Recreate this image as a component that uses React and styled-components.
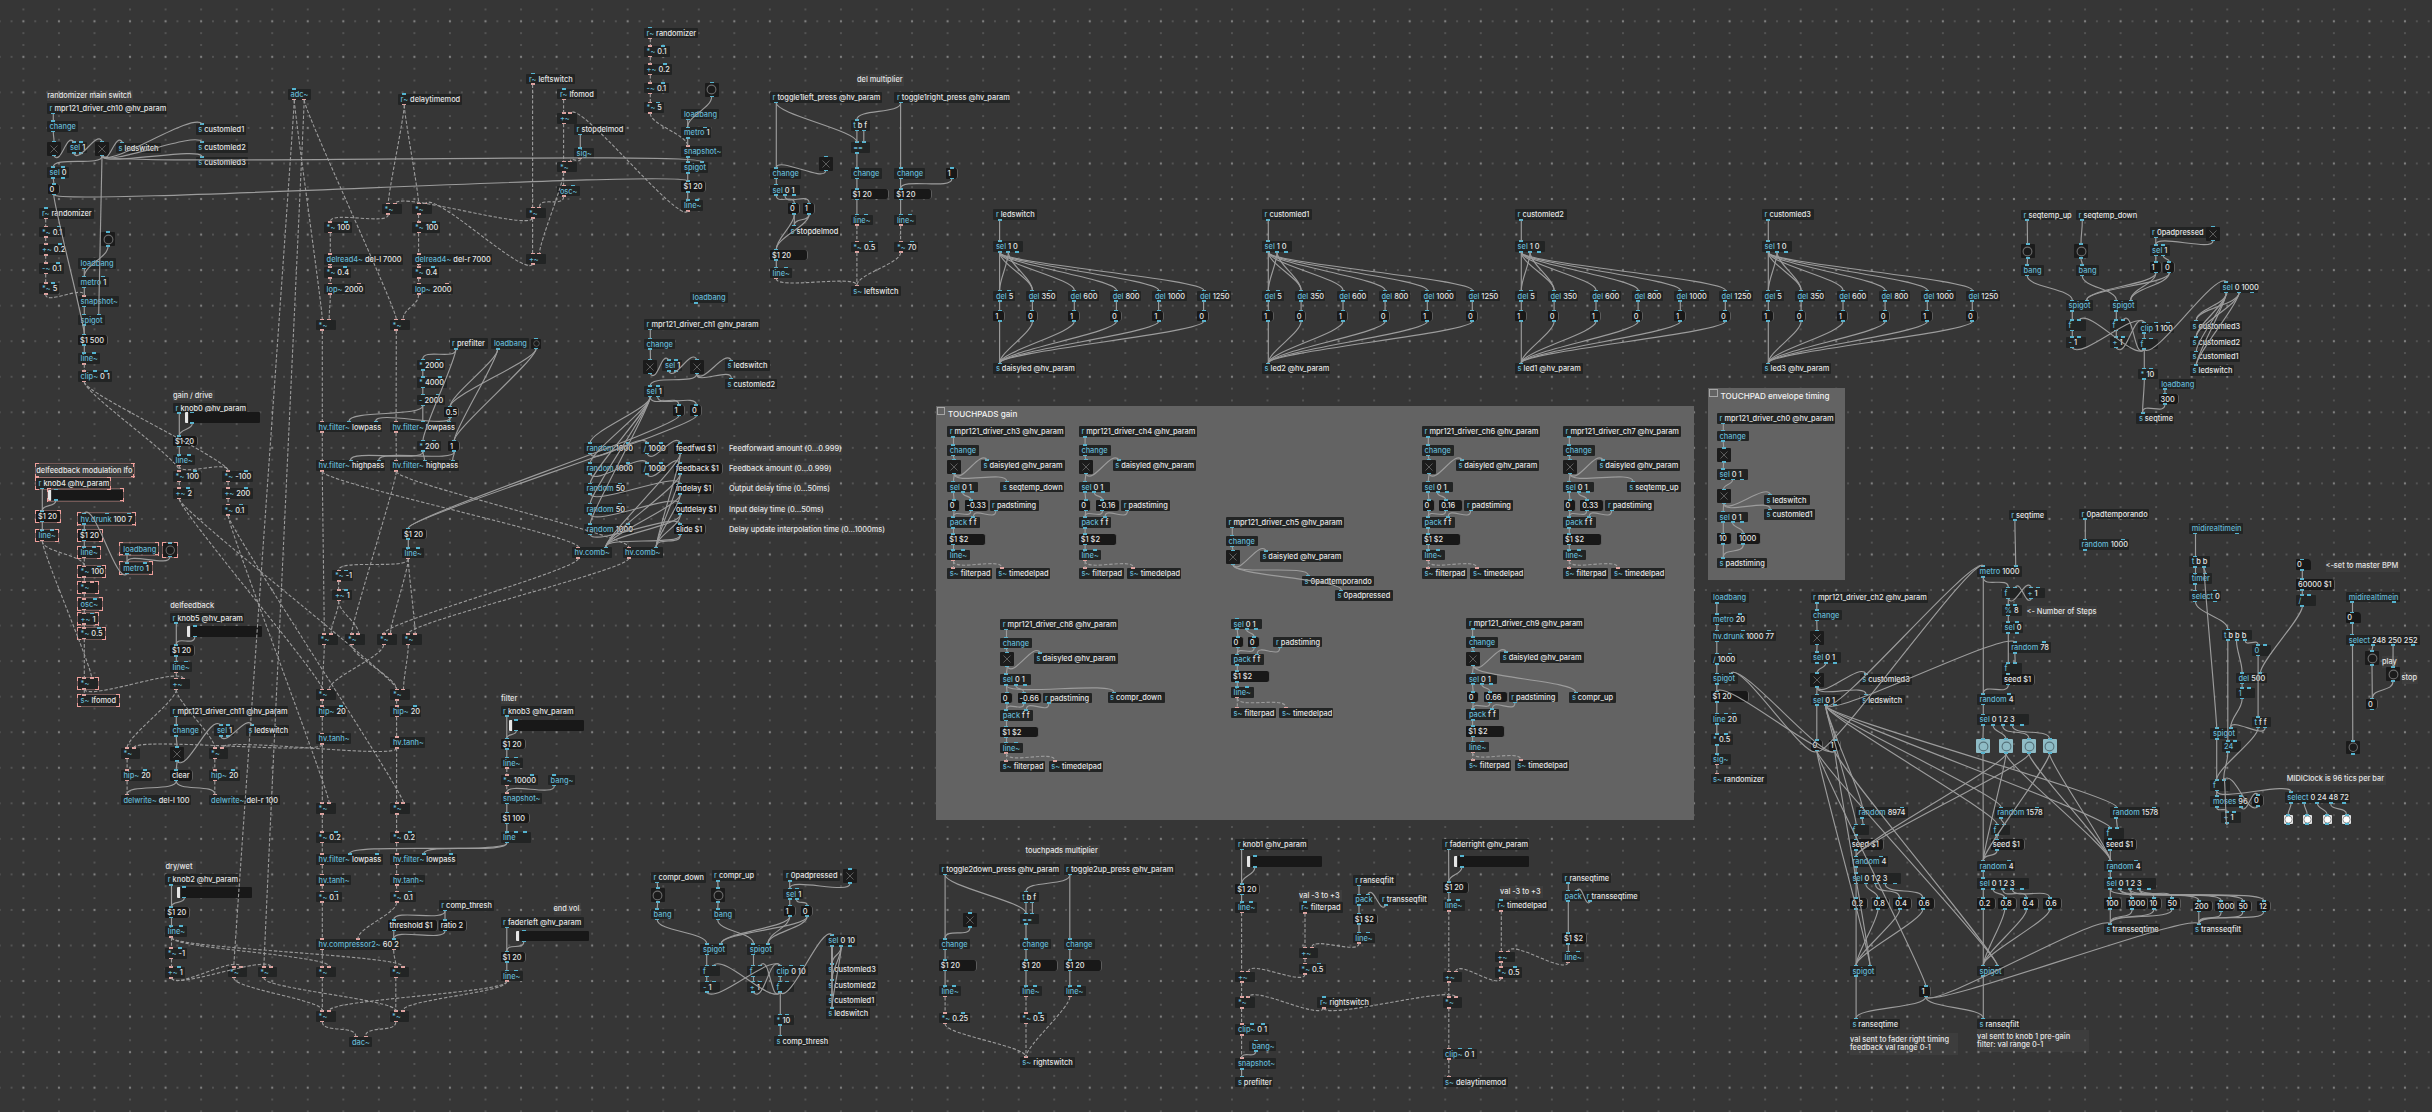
import React from "react";
import styled, { createGlobalStyle, css } from "styled-components";

const GlobalStyle = createGlobalStyle`
  html, body { margin: 0; padding: 0; background: #363636; }
  body {
    font-family: Inter, "Liberation Sans", sans-serif;
    font-feature-settings: "calt" 0, "liga" 0;
    overflow: hidden;
  }
`;

const color = {
  canvas: "#363636",
  panel: "#636363",
  object: "#222424",
  message: "#181818",
  text: "#e6e6e6",
  name: "#66b8d4",
  control: "#54b4d0",
  signal: "#e0a3a0",
  wire: "#9c9c9c",
  select: "#f0a09c",
};

const GRID = 35.546;
const BOX_H = 10.7;
const PORT_INSET = 6.3;

/* ---------- patch description ----------
   kind id x y width inlets outlets text
   inlets / outlets: one letter per port, b = control, s = signal, - = none */
const NODES = `
o a1 47 103 120 - b r mpr121_driver_ch10 @hv_param
o a2 47 121 31 b b change
t a3 47 141.5 14 b b
o a4 67.4 142.3 19.6 bb bb sel 1
t a5 95 141.5 14 b b
o a6 116 142.5 45 b - s ledswitch
o a7 195.7 124 50.5 b - s customled1
o a8 195.7 142.3 52 b - s customled2
o a9 195.7 157.3 52 b - s customled3
o a10 47 167.3 22 bb bb sel 0
m a11 47.5 183.8 12 b b 0
o a12 39.4 208 54.5 b s r~ randomizer
o a13 39.4 226.5 26 sb s *~ 0.1
o a14 39.4 244.3 27 sb s +~ 0.2
o a15 39.4 263 25 sb s -~ 0.1
o a16 39.4 283.3 20 sb s *~ 5
n a17 101 232 14 b b
o a18 78 258 38 - b loadbang
o a19 78 276.7 31 bb b metro 1
o a20 78 296 41 s b snapshot~
o a21 78 314.5 27 bb b spigot
m a22 78 334.5 30 b b $1 500
o a23 78 353.2 22 bb s line~
o a24 78 371 34 sbb s clip~ 0 1
o adc 288 89 22.5 b ss adc~
o dtm 398 94 64 b s r~ delaytimemod
o b1 382 203.5 19.5 ss s *~
o b2 412.3 203.5 19.5 ss s *~
o b3 324 222 28 sb s *~ 100
o b4 412.3 222 28 sb s *~ 100
o b5 324 254 79 s s delread4~ del-l 7000
o b6 412.3 254 80 s s delread4~ del-r 7000
o b7 324 267.3 27 sb s *~ 0.4
o b8 412.3 267.3 27 sb s *~ 0.4
o b9 324 283.5 41 ss s lop~ 2000
o b10 412.3 283.5 41 ss s lop~ 2000
o b11 316 319.5 19.5 ss s *~
o b12 390 319.5 19.5 ss s *~
o c1 449.5 338.3 38 - b r prefilter
o c2 491.3 338.3 38 - b loadbang
n c3 531 338.5 10 b b
o c4 416.5 359.5 28 bb b * 2000
o c5 416.5 377 30 bb b * 4000
o c6 416.5 394.7 28 bb b - 2000
m c7 443.8 406.7 15.5 b b 0.5
o d1 316 421.5 66 sbb s hv.filter~ lowpass
o d2 389.8 421.5 66 sbb s hv.filter~ lowpass
o c8 416.7 440.6 24 bb b * 200
m c9 448 440.6 12 b b 1
o d3 316 460.4 69 sbb s hv.filter~ highpass
o d4 390 460.4 69 sbb s hv.filter~ highpass
o e1 173 402.5 74 - b r knob0 @hv_param
h e2 184.5 412.4 75 b b
m e3 173 435.8 25 b b $1 20
o e4 173 454.8 22 bb s line~
o e5 173 471 28 sb s *~ 100
o e6 173 488 21 sb s +~ 2
o e7 221.8 471 31 sb s *~ -100
o e8 221.8 488 31 sb s +~ 200
o e9 221.8 504.5 26 sb s *~ 0.1
O f1 36 478 74 - b r knob4 @hv_param
H f2 48 489.6 75 b b
M f3 36 511 25 b b $1 20
O f4 36 530 22 bb s line~
O f5 78 513.5 57 bbb b hv.drunk 100 7
M f6 78 530 25 b b $1 20
O f7 78 547 22 bb s line~
O f8 78 566.4 27 sb s *~ 100
O f9 78 582.3 20 ss s *~
O f10 78 598.8 23.5 sb s osc~
O f11 78 613.6 20 sb s +~ 1
O f12 78 628 27 sb s *~ 0.5
O f13 78 678.3 20 ss s *~
O f14 78 695.3 41 s - s~ lfomod
O f15 120.7 543.5 37 - b loadbang
N f16 163 543 13.5 b b
O f17 120.7 562.8 31 bb b metro 1
o g1 170 612.5 74 - b r knob5 @hv_param
h g2 187 626 75 b b
m g3 170 645.2 25 b b $1 20
o g4 170 661.7 22 bb s line~
o g5 170 678.7 19.5 ss s +~
o h1 170 706 118 - b r mpr121_driver_ch11 @hv_param
o h2 170 725.3 31 b b change
t h3 170 747 14 b b
o h4 214.3 725.3 20 bb bb sel 1
o h5 245.8 725.3 43 b - s ledswitch
o h6 120.8 748 19.5 ss s *~
o h7 208.5 748 19.5 ss s *~
o h8 120.8 770 31 sb s hip~ 20
o h9 208.5 770 31 sb s hip~ 20
m h10 170 770 22.5 b b clear
o h11 120.8 794.7 70 s - delwrite~ del-l 100
o h12 208.5 794.7 71 s - delwrite~ del-r 100
m i1 402 528.5 25 b b $1 20
o i2 402 547.8 22 bb s line~
o i3 332.3 570.4 20.5 sb s *~ -1
o i4 332.3 589.8 20 sb s +~ 1
o j1 318 634 19.5 ss s *~
o j2 345.3 634 19.5 ss s *~
o j3 377.3 634 19.5 ss s *~
o j4 402 634 19.5 ss s *~
o k1 316 689.4 19.5 ss s *~
o k2 390.3 689.4 19.5 ss s *~
o k3 316 706 31 sb s hip~ 20
o k4 390.3 706 31 sb s hip~ 20
o k5 316 733.4 35 s s hv.tanh~
o k6 390.3 737.3 35 s s hv.tanh~
o k7 316 803.3 19.5 ss s *~
o k8 390.3 803.3 19.5 ss s *~
o k9 316 832 26 sb s *~ 0.2
o k10 390.3 832 26 sb s *~ 0.2
o k11 316 854 67 sbb s hv.filter~ lowpass
o k12 390.3 854 67 sbb s hv.filter~ lowpass
o k13 316 874.5 35 s s hv.tanh~
o k14 390.3 874.5 35 s s hv.tanh~
o k15 316 891.5 26 sb s *~ 0.1
o k16 390.3 891.5 26 sb s *~ 0.1
o l1 438.7 900 55 - b r comp_thresh
m l2 387.5 920 50 b b threshold $1
m l3 438.7 920 28.5 b b ratio 2
o l4 316 939 84 ssb ss hv.compressor2~ 60 2
o m1 227.5 966.8 19.5 ss s *~
o m2 257.6 966.8 19.5 ss s *~
o m3 316 966.8 19.5 ss s *~
o m4 389.5 966.8 19.5 ss s *~
o m5 316 1011 19.5 ss s *~
o m6 389.5 1011 19.5 ss s *~
o m7 349.4 1036.5 22.5 ss - dac~
o n1 165.2 874.3 74 - b r knob2 @hv_param
h n2 176.5 887 75 b b
m n3 165.2 907 25 b b $1 20
o n4 165.2 926.3 22 bb s line~
o n5 165.2 948 21.5 sb s *~ -1
o n6 165.2 967.2 20 sb s +~ 1
o o1 500.5 917 83 - b r faderleft @hv_param
h o2 516 930.7 72.5 b b
m o3 500.5 951.5 25 b b $1 20
o o4 500.5 970.5 22 bb s line~
o p1 500.5 705.5 74.5 - b r knob3 @hv_param
h p2 508.5 720 75 b b
m p3 500.5 738.5 25 b b $1 20
o p4 500.5 757.5 22 bb s line~
o p5 500.5 774.8 37.5 sb s *~ 10000
o p6 548 774.8 27 b b bang~
o p7 500.5 793 41 s b snapshot~
m p8 500.5 812.7 29 b b $1 100
o p9 500.5 832 30.5 bbb b line
o q1 526.3 73.6 49 b s r~ leftswitch
o q2 557.3 88.8 39.5 b s r~ lfomod
o q3 557.3 113 19.5 ss s +~
o q4 574 124 51 - b r stopdelmod
o q5 574 148 20 b s sig~
o q6 557.3 161.5 19.5 ss s *~
o q7 557.3 185.5 22.5 sb s osc~
o q8 526.3 207.5 19.5 ss s *~
o q9 526.3 253.5 19.5 ss s +~
o r1 644 27.7 54 b s r~ randomizer
o r2 644 46 25.5 sb s *~ 0.1
o r3 644 64 27.5 sb s +~ 0.2
o r4 644 82.8 25 sb s -~ 0.1
o r5 644 102.4 20 sb s *~ 5
n r6 704.6 82.5 14 b b
o r7 681.4 108.7 37.5 - b loadbang
o r8 681.4 127.4 30 bb b metro 1
o r9 681.4 146.3 41 s b snapshot~
o r10 681.4 162.3 27 bb b spigot
m r11 681.4 181.2 25 b b $1 20
o r12 681.4 200.3 22 bb s line~
o s1 770 92 112 - b r toggle1left_press @hv_param
o s2 894.3 92 116 - b r toggle1right_press @hv_param
o s3 850.6 120 19.5 b bb t b f
o s4 850.6 142.3 19.5 bb b ==
t s5 818.6 156.6 14 b b
o s6 770 168 31 b b change
o s7 850.6 168 31 b b change
o s8 894.3 168 31 b b change
o s9 770 184.5 30 b bbb sel 0 1
m s10 788 203.4 12 b b 0
m s11 802.8 203.4 12 b b 1
o s12 788 225.5 52 b - s stopdelmod
m s13 770 249.5 38 b b $1 20
o s14 770 267.7 22 bb s line~
m s15 850.6 188.8 38 b b $1 20
m s16 894.3 188.8 38 b b $1 20
o s17 850.6 214.5 22 bb s line~
o s18 894.3 214.5 22 bb s line~
o s19 850.6 241.5 27 sb s *~ 0.5
o s20 894.3 241.5 24 sb s *~ 70
o s21 850.6 285.7 50 s - s~ leftswitch
m s22 945.5 168 12 b b 1
o t0 690 292.2 38 - b loadbang
o t1 644 319 116 - b r mpr121_driver_ch1 @hv_param
o t2 644 338.6 31 b b change
t t3 643.4 359.6 14 b b
o t4 662.4 360.2 20 bb bb sel 1
t t5 689.6 359.6 14 b b
o t6 725 360.4 45 b - s ledswitch
o t7 725 378.5 52 b - s customled2
o t8 644 386 20 bb bb sel 1
m t9 672.5 405 12 b b 1
m t10 690 405 12 b b 0
o u1 584 443 50 bb b random 1000
o u2 584 463.2 50 bb b random 1000
o u3 584 483.4 42 bb b random 50
o u4 584 503.6 42 bb b random 50
o u5 584 523.8 50 bb b random 1000
o v1 641 443 26.5 bb b / 1000
o v2 641 463.2 26.5 bb b / 1000
m w1 674 443 44 b b feedfwd $1
m w2 674 463.2 49 b b feedback $1
m w3 674 483.4 40 b b indelay $1
m w4 674 503.6 46 b b outdelay $1
m w5 674 523.8 32 b b slide $1
o x1 572 547.4 40 sb s hv.comb~
o x2 622.5 547.4 40 sb s hv.comb~
o y1 651 872 55 - b r compr_down
o y2 711.5 870.2 44.5 - b r compr_up
o y3 783.4 870.2 57 - b r 0padpressed
t y4 843 869.3 14 b b
n y5 650.6 888 14 b b
n y6 711 888 14 b b
o y7 783.4 888.6 19.5 bb bb sel 1
m y8 783.5 905.5 12 b b 1
m y9 800.8 905.5 12 b b 0
o y10 651 908.8 23 b b bang
o y11 711.5 908.8 23 b b bang
o y12 700.4 944 27 bb b spigot
o y13 747.2 944 27 bb b spigot
o y14 700.4 965.7 19.5 bb b f
o y15 747.2 965.7 19.5 bb b f
o y16 774 965.7 34 bbb b clip 0 10
o y17 700.4 981.5 19.5 bb b - 1
o y18 747.2 981.5 19.5 bb b + 1
o y19 774 981.5 19.5 bb b f
o y20 774 1014.5 19.5 bb b * 10
o y21 774 1035.6 55 b - s comp_thresh
o y22 825.7 935.3 31 b bbb sel 0 10
o y23 825.7 964 52 b - s customled3
o y24 825.7 980.2 52 b - s customled2
o y25 825.7 995 50 b - s customled1
o y26 825.7 1008.3 44 b - s ledswitch
o z1 938.8 864 121 - b r toggle2down_press @hv_param
o z2 1063.5 864 111 - b r toggle2up_press @hv_param
o z3 1019.7 891.7 19 b bb t b f
o z4 1019.7 913.5 19 bb b ==
t z5 963 913 14 b b
o z6 938.8 938.8 31 b b change
o z7 1019.7 938.8 31 b b change
o z8 1063.5 938.8 31 b b change
m z9 938.8 960 38 b b $1 20
m z10 1019.7 960 38 b b $1 20
m z11 1063.5 960 38 b b $1 20
o z12 938.8 985.8 22 bb s line~
o z13 1019.7 985.8 22 bb s line~
o z14 1063.5 985.8 22 bb s line~
o z15 938.8 1012.8 31 sb s *~ 0.25
o z16 1019.7 1012.8 27 sb s *~ 0.5
o z17 1019.7 1057.3 55 s - s~ rightswitch
o M1 1235.3 839 73 - b r knob1 @hv_param
h M2 1247 856.3 75 b b
m M3 1235.3 883.8 25 b b $1 20
o M4 1235.3 902 22 bb s line~
o M5 1235.3 971.5 19.5 ss s +~
o M6 1235.3 997.3 19.5 ss s *~
o M7 1235.3 1024.3 34 sbb s clip~ 0 1
o M8 1249.4 1040.5 27 b b bang~
o M9 1235.3 1058.3 41 s b snapshot~
o M10 1235.3 1076.6 38 b - s prefilter
o N2 1298.7 902.3 44 b s r~ filterpad
o N3 1298.7 947.7 19.5 ss s +~
o N4 1298.7 963.5 27 sb s *~ 0.5
o O1 1352.7 875 43 - b r ranseqfilt
o O2 1352.7 894.4 21.5 bb b pack
o O3 1379.4 894.4 49 - b r transseqfilt
m O4 1352.7 913.5 25 b b $1 $2
o O5 1352.7 932.5 22 bb s line~
o P1 1317.4 997.3 54 b s r~ rightswitch
o Q1 1442.3 839 87 - b r faderright @hv_param
h Q2 1454 856.3 75 b b
m Q3 1442.5 882 26 b b $1 20
o Q4 1442.5 900.3 22 bb s line~
o Q5 1442.5 971.5 19.5 ss s +~
o Q6 1442.5 997.3 19.5 ss s *~
o Q7 1442.5 1048.6 34 sbb s clip~ 0 1
o Q8 1442.5 1076.6 65 s - s~ delaytimemod
o R2 1495 900.3 53 b s r~ timedelpad
o R3 1495 951.5 19.5 ss s +~
o R4 1495 967.3 26.5 sb s *~ 0.5
o S1 1562 872.6 49 - b r ranseqtime
o S2 1562 890.6 21.5 bb b pack
o S3 1584 890.6 56 - b r transseqtime
m S4 1562 933.2 25 b b $1 $2
o S5 1562 951.7 22 bb s line~
o A1 1717 413 118 - b r mpr121_driver_ch0 @hv_param
o A2 1717 430.6 32 b b change
t A3 1716.6 447.8 14 b b
o A4 1717 469 31 b bbb sel 0 1
t A5 1716.6 489.4 14 b b
o A6 1764 494.5 46 b - s ledswitch
o A7 1764 509.4 51 b - s customled1
o A8 1717 511.5 31 b bbb sel 0 1
m A9 1717 533.4 15 b b 10
m A10 1737 533.4 24 b b 1000
o A11 1717 557.8 50 b - s padstiming
o B1 1710.5 592.4 38 - b loadbang
o B2 1710.5 614 36 bb b metro 20
o B3 1710.5 630.7 65 bbb b hv.drunk 1000 77
o B4 1710.5 653.6 26 bb b / 1000
o B5 1710.5 673.4 27 bb b spigot
m B6 1710.5 691.4 38 b b $1 20
o B7 1710.5 713.5 30 bbb b line 20
o B8 1710.5 734.2 22 bb b * 0.5
o B9 1710.5 754 20 b s sig~
o B10 1710.5 773.5 56 s - s~ randomizer
o C1 1810.5 592.4 117 - b r mpr121_driver_ch2 @hv_param
o C2 1810.5 609.8 31 b b change
t C3 1810 630.6 14 b b
o C4 1810.5 652.2 30.5 b bbb sel 0 1
t C5 1810 673.2 14 b b
o C6 1859.7 674 52 b - s customled3
o C7 1859.7 694.6 45 b - s ledswitch
o C8 1810.5 694.6 30.5 b bbb sel 0 1
m C9 1810.5 740 12 b b 0
m C10 1828.5 740 12 b b 1
o D1 2008.6 509.6 38 - b r seqtime
o D2 2079 508.6 70 - b r 0padtemporando
o D3 2079 539.4 50 bb b random 1000
o D4 1977 566.2 45 bb b metro 1000
o D5 2002 587.7 19.5 bb b f
o D6 2025 587.7 19.5 bb b + 1
o D7 2002 605 19.5 bb b % 8
o D8 2002 622.3 21 bb bb sel 0
o D9 2008.6 642.3 42 bb b random 78
o D10 2002 663.2 19.5 bb b f
m D11 2002 674 33 b b seed $1
o D12 1977 694 38 bb b random 4
o D13 1977 714.4 51.5 b bbbbb sel 0 1 2 3
l D14 1976 739.3 14 b b
l D15 1999 739.3 14 b b
l D16 2022 739.3 14 b b
l D17 2042.5 739.3 14 b b
o E1 2189.2 523 54 - bb midirealtimein
o E2 2189.2 556.4 21 b bb t b b
o E3 2189.2 573.4 22.5 bb b timer
o E4 2189.2 590.7 32 bb bb select 0
o E5 2221.5 629.5 30 b bbb t b b b
o E6 2251.8 645 19.5 bb b 0
o E7 2235.8 672.8 31 bb b del 500
o E8 2235.8 687.8 19.5 bb b 1
o E9 2251.8 716.8 19.5 b bb t f f
o E10 2210.4 728.2 26.5 bb b spigot
o E11 2221.5 741.2 19.5 bb b 24
o E12 2210.4 780 19.5 bb b f
o E13 2210.4 796.3 37 bb bb moses 96
m E14 2252 795.3 12 b b 0
o E15 2221 812.3 19.5 bb b + 1
x F1 2296 559.4 14.5 b b 0
m F2 2296 579.2 39 b b 60000 $1
o F3 2296 595.3 19.5 bb b /
o F4 2346.2 591.5 54 - bb midirealtimein
x F5 2346.2 612.4 14.5 b b 0
o F6 2346.2 634.6 73.5 b bbbb select 248 250 252
n F7 2365 651 14 b b
n F8 2386 667.2 14 b b
m F9 2366 698.7 12 b b 0
n F10 2346 740.8 13.5 b b
o G1 2284.7 792.3 65.5 b bbbbb select 0 24 48 72
w G2 2283.7 814.8 9 b b
w G3 2302.6 814.8 9 b b
w G4 2322.6 814.8 9 b b
w G5 2342 814.8 9 b b
o H1 1856 807.4 52 bb b random 8974
o H2 1849.8 824.5 19.5 bb b f
m H3 1849.8 839.4 34 b b seed $1
o H4 1849.8 856.4 38 bb b random 4
o H5 1849.8 873 51.5 b bbbbb sel 0 1 2 3
m H6 1849.8 898.3 18.5 b b 0.2
m H7 1871.6 898.3 18.5 b b 0.8
m H8 1893.3 898.3 18.5 b b 0.4
m H9 1916.5 898.3 18.5 b b 0.6
o H10 1849.8 965.5 26.5 bb b spigot
o H11 1849.8 1018.5 50 b - s ranseqtime
o I1 1994.7 807.4 49 bb b random 1578
o I2 1990.8 824.5 19.5 bb b f
m I3 1990.8 839.4 34 b b seed $1
o I4 1977 860.6 38 bb b random 4
o I5 1977 878.2 51.5 b bbbbb sel 0 1 2 3
m I6 1977 898.3 18.5 b b 0.2
m I7 1998.4 898.3 18.5 b b 0.8
m I8 2020.2 898.3 18.5 b b 0.4
m I9 2043.4 898.3 18.5 b b 0.6
o I10 1977 965.5 26.5 bb b spigot
o I11 1977 1018.5 43 b - s ranseqfilt
o J1 2110.2 807.4 50 bb b random 1578
o J2 2104 828.2 19.5 bb b f
m J3 2104 839.4 33 b b seed $1
o J4 2104 860.6 38 bb b random 4
o J5 2104 878.2 51.5 b bbbbb sel 0 1 2 3
m J6 2104 898.3 18 b b 100
m J7 2125.8 898.3 22 b b 1000
m J8 2147.5 898.3 14 b b 10
m J9 2165.6 898.3 15 b b 50
m J10 2192.5 900.8 20.5 b b 200
m J11 2214.8 900.8 20.5 b b 1000
m J12 2236.5 900.8 15 b b 50
m J13 2257.3 900.8 14 b b 12
o K1 2104 924 56 b - s transseqtime
o K2 2192.5 924 50 b - s transseqfilt
m L1 1919.4 986 12 b b 1
o T1 2021 209.5 48 - b r seqtemp_up
o T2 2076 209.5 60 - b r seqtemp_down
o T3 2149.5 227 57 - b r 0padpressed
t T4 2206 226.5 14 b b
n T5 2020.5 244 14 b b
n T6 2074 244 14 b b
o T7 2149.5 245 20 bb bb sel 1
m T8 2149.5 262 12 b b 1
m T9 2163 262 12 b b 0
o T10 2021 265 23 b b bang
o T11 2076 265 23 b b bang
o T12 2066 300.4 27 bb b spigot
o T13 2110 300.4 27 bb b spigot
o T14 2066 320 19.5 bb b f
o T15 2110 320 19.5 bb b f
o T16 2138 322.5 36 bbb b clip 1 100
o T17 2066 337 19.5 bb b - 1
o T18 2110 337 19.5 bb b + 1
o T19 2138 338.5 19.5 bb b f
o T20 2138 368.5 19.5 bb b * 10
o T21 2136.3 413 38 b - s seqtime
o T22 2220 282 38 b bbb sel 0 1000
o T23 2190 320.6 52 b - s customled3
o T24 2190 336.8 52 b - s customled2
o T25 2190 351.4 50 b - s customled1
o T26 2190 365.2 44 b - s ledswitch
o T27 2158.6 378.5 37 - b loadbang
m T28 2158.6 393.5 20 b b 300
`;

const WIRES = `
a1>a2 a2>a3 a3>a4 a4>a5 a5>a6 a5>a7 a5>a8 a5>a9 a5>a10 a10>a11 a11>a22 a11>r11 a5>r10:1 a5>a21:1
a12>a13 a13>a14 a14>a15 a15>a16 a16>a20 a17>a19 a18>a19 a19>a20 a20>a21 a21>a22 a22>a23 a23>a24 a24>e5 a24>e7
adc>m1 adc>b11 adc:1>m2 adc:1>b12 dtm>b1 dtm>b2 q8>b1:1 q9>b2:1 b1>b3 b2>b4 b3>b5 b4>b6 b5>b7 b6>b8 b7>b9 b8>b10 b9>b11:1 b10>b12:1
b11>d1 b12>d2 d1>d3 d2>d4 c1>c4 c1>c8 c2>c7 c3>c7 c2>c9 c3>c9 c4>c5 c5>c6 c6>d1:1 c6>d2:1 c7>d1:2 c7>d2:2 c8>d3:1 c8>d4:1 c9>d3:2 c9>d4:2
d3>j1 d4>j2 d3>x1 d4>x2 x1>j3 x2>j4 e1>e3 e2>e3 e3>e4 e4>e5 e4>e7 e5>e6 e7>e8 e8>e9 e6>k1 e6>k2 e9>k7:1 e9>k8:1
f1>f3 f2>f3 f3>f4 f4>f8 f4>f13:1 f5>f6 f6>f7 f7>f8 f8>f9 f9>f10 f10>f11 f11>f12 f12>f13 f13>f14 f13>g5:1 f15>f17 f16>f17 f17>f5
g1>g3 g2>g3 g3>g4 g4>g5 g5>h6 g5>h7 k5>h6:1 k6>h7:1 h1>h2 h2>h3 h3>h4 h4>h5 h3>h10 h6>h8 h8>h11 h7>h9 h9>h12 h10>h11 h10>h12
t9>i1 t10>i1 i1>i2 i2>i3 i2>j3:1 i2>j4:1 i3>i4 i4>j1:1 i4>j2:1 j1>k1 j2>k2 j3>k1:1 j4>k2:1 k1>k3 k3>k5 k2>k4 k4>k6 k5>k7 k6>k8
k7>k9 k9>k11 k11>k13 k13>k15 k15>l4 k8>k10 k10>k12 k12>k14 k14>k16 k16>l4:1 p9>k11:1 p9>k12:1 l1>l2 l1>l3 l2>l4:2 l3>l4:2 l4>m3 l4:1>m4
m1>m5 m2>m6 m3>m5 m4>m6 m5>m7 m6>m7:1 o4>m5:1 o4>m6:1 o1>o3 o2>o3 o3>o4 n1>n3 n2>n3 n3>n4 n4>n5 n5>n6 n6>m1:1 n6>m2:1 n4>m3:1 n4>m4:1
p1>p3 p2>p3 p3>p4 p4>p5 p5>p7 p6>p7 p7>p8 p8>p9
q1>q8 q8>q9 q2>q3 q3>q6 q4>q5 q5>q6:1 q6>q7 q7>q8:1 q6>q9:1 r12>q3:1 r1>r2 r2>r3 r3>r4 r4>r5 r5>r9 r6>r8 r7>r8 r8>r9 r9>r10 r10>r11 r11>r12
s1>s6 s1>s4 s2>s3 s2>s8 s3>s4 s3:1>s4:1 s4>s7 s5>s6 s6>s9 s9>s10 s9:1>s11 s10>s12 s11>s12 s10>s13 s11>s13 s13>s14 s14>s21 s7>s15 s15>s17 s17>s19 s19>s21 s8>s16 s22>s16 s16>s18 s18>s20 s20>s21
t1>t2 t2>t3 t3>t4 t4>t5 t5>t6 t5>t7 t5>t8 t8>t9 t8:1>t10 t8>u1 t8>u2 t8>u3 t8>u4 t8>u5 u1>v1 u2>v2 v1>w1 v2>w2 u3>w3 u4>w4 u5>w5
w1>x1:1 w2>x1:1 w3>x1:1 w4>x1:1 w5>x1:1 w1>x2:1 w2>x2:1 w3>x2:1 w4>x2:1 w5>x2:1
y1>y5 y2>y6 y5>y10 y6>y11 y10>y12 y11>y13 y3>y7 y4>y7 y7>y8 y7:1>y9 y8>y12:1 y9>y12:1 y8>y13:1 y9>y13:1 y12>y14 y13>y15 y14>y17 y15>y18 y17>y16 y18>y16 y16>y19 y19>y14:1 y19>y15:1 y19>y20 y20>y21 y19>y22
y22>y23 y22>y24 y22>y25 y22>y26 y22:1>y23 y22:1>y24 y22:1>y26
z1>z6 z1>z4 z2>z3 z2>z8 z3>z4 z3:1>z4:1 z4>z7 z5>z6 z6>z9 z7>z10 z8>z11 z9>z12 z10>z13 z11>z14 z12>z15 z13>z16 z15>z17 z16>z17 z14>z17
M1>M3 M2>M3 M3>M4 M4>M5 M5>M6 M6>M7 M7>M9 M8>M9 M9>M10 N2>N3 N3>N4 N4>M5:1 O1>O2 O3>O2:1 O2>O4 O4>O5 O5>N3:1 P1>M6:1 P1>Q6:1
Q1>Q3 Q2>Q3 Q3>Q4 Q4>Q5 Q5>Q6 Q6>Q7 Q7>Q8 R2>R3 R3>R4 R4>Q5:1 S1>S2 S3>S2:1 S2>S4 S4>S5 S5>R3:1
A1>A2 A2>A3 A3>A4 A4:1>A5 A5>A6 A5>A7 A5>A8 A8>A9 A8:1>A10 A9>A11 A10>A11 B1>B2 B2>B3 B3>B4 B4>B5 B5>B6 B6>B7 B7>B8 B8>B9 B9>B10
C1>C2 C2>C3 C3>C4 C4:1>C5 C5>C6 C5>C7 C5>C8 C8>C9 C8:1>C10 C9>B5:1 C10>B5:1 C10>B6 C8:1>D4 C9>D4 C8:1>D9 C8:1>H1 C8:1>H2 C8:1>I1 C8:1>I2 C8:1>J1 C8:1>J2
C9>H10:1 C9>I10:1 C10>H10:1 C10>I10:1 C9>L1 D1>D4:1 D2>D3 D4>D5 D4>D12 D5>D6 D6>D5:1 D5>D7 D7>D8 D8>D10 D9>D10:1 D10>D11 D11>D12 D12>D13 D13>D14 D13:1>D15 D13:2>D16 D13:3>D17
D14>I4 D15>H4 D15>I4 D15>J4 D16>H4 D16>J4 D17>I4 D17>J4
E1>E2 E2>E3 E2:1>E3:1 E2:1>E10 E3>E4 E4>E5 E5>E11 E5:1>E7 E5:2>E6 F3>E7:1 E7>E8 E8>E10:1 E6>E9 E9>E12 E9:1>E10:1 E10>E12 E11>E12:1 E12>E13 E12>G1 E13>E15 E13:1>E14 E14>E12:1 E15>E12:1
F1>F2 F2>F3 F4>F5 F5>F6 F6>F10 F6:1>F7 F6:2>F8 F7>F9 F8>F9 G1>G2 G1:1>G3 G1:2>G4 G1:3>G5
H1>H2:1 H2>H3 H3>H4 H4>H5 H5>H6 H5:1>H7 H5:2>H8 H5:3>H9 H6>H10 H7>H10 H8>H10 H9>H10 H10>H11 L1>H11 L1>I11 L1>K1 L1>K2
I1>I2:1 I2>I3 I3>I4 I4>I5 I5>I6 I5:1>I7 I5:2>I8 I5:3>I9 I6>I10 I7>I10 I8>I10 I9>I10 I10>I11
J1>J2:1 J2>J3 J3>J4 J4>J5 J5>J6 J5:1>J7 J5:2>J8 J5:3>J9 J5>J10 J5:1>J11 J5:2>J12 J5:3>J13 J6>K1 J7>K1 J8>K1 J9>K1 J10>K2 J11>K2 J12>K2 J13>K2
T1>T5 T5>T10 T2>T6 T6>T11 T10>T12 T11>T13 T3>T7 T4>T7 T7>T8 T7:1>T9 T8>T12:1 T9>T12:1 T8>T13:1 T9>T13:1 T12>T14 T13>T15 T14>T17 T15>T18 T17>T16 T18>T16 T16>T19 T19>T14:1 T19>T15:1 T19>T20 T19>T22 T20>T21
T22>T23 T22>T24 T22>T25 T22>T26 T22:1>T23 T22:1>T24 T22:1>T26 T27>T28 T28>T21
`;

/* text, x, vertical centre, box width */
const COMMENTS = [
  ["randomizer main switch", 47.3, 95.7, 86],
  ["gain / drive", 173, 395.7, 42],
  ["delfeedback modulation lfo", 36.3, 470.5, 97, true],
  ["delfeedback", 170.3, 605.3, 45],
  ["dry/wet", 165.5, 867.2, 30],
  ["end vol", 553.5, 909.2, 27],
  ["filter", 501, 698.3, 18],
  ["del multiplier", 857, 80.2, 47],
  ["touchpads multiplier", 1025.5, 851, 74],
  ["Feedforward amount (0...0.999)", 729, 448.8, 113],
  ["Feedback amount (0...0.999)", 729, 469, 102],
  ["Output delay time (0...50ms)", 729, 489.2, 100],
  ["Input delay time (0...50ms)", 729, 509.3, 94],
  ["Delay update interpolation time (0...1000ms)", 729, 529.5, 155],
  ["val -3 to +3", 1299, 895.5, 43],
  ["val -3 to +3", 1500, 892, 43],
  ["<- Number of Steps", 2026.5, 611.3, 70],
  ["<-set to master BPM", 2325.5, 566, 74],
  ["play", 2382, 661.8, 16],
  ["stop", 2401.5, 677.8, 16],
  ["MIDIClock is 96 tics per bar", 2286.7, 779.2, 99],
];

const NOTES = [
  [1850, 1033, 108, ["val sent to fader right timing", "feedback val range 0-1"]],
  [1977, 1030, 112, ["val sent to knob 1 pre-gain", "filter: val range 0-1"]],
];

const kinds = {
  o: "object", m: "message", t: "toggle", n: "bang", l: "bangLit", w: "bangWhite", h: "slider", x: "number",
};

function buildPatch() {
  const nodes = {};
  const wires = [];
  const add = (kind, id, x, y, w, ins, outs, text = "") => {
    const k = kinds[kind.toLowerCase()];
    const square = ["toggle", "bang", "bangLit", "bangWhite"].includes(k);
    nodes[id] = {
      id, kind: k, x, y, w,
      h: square ? w : BOX_H,
      inset: square ? w / 2 : k === "slider" ? 7.8 : PORT_INSET,
      ins: ins === "-" ? "" : ins,
      outs: outs === "-" ? "" : outs,
      text,
      selected: kind !== kind.toLowerCase(),
    };
  };
  NODES.trim().split("\n").forEach((line) => {
    const [k, id, x, y, w, ins, outs, ...t] = line.split(" ");
    add(k, id, +x, +y, +w, ins, outs, t.join(" "));
  });
  const link = (list) =>
    list.trim().split(/\s+/).forEach((w) => {
      const [a, b] = w.split(">").map((e) => e.split(":"));
      wires.push([a[0], +(a[1] || 0), b[0], +(b[1] || 0)]);
    });
  link(WIRES);

  const tail = (p, x, y) => {
    add("o", p + "pk", x, y, 32.5, "bb", "b", "pack f f");
    add("m", p + "ms", x, y + 16.7, 38.5, "b", "b", "$1 $2");
    add("o", p + "ln", x, y + 32.5, 22.5, "bb", "s", "line~");
    add("o", p + "fp", x, y + 51, 45, "s", "-", "s~ filterpad");
    add("o", p + "tp", x + 48.4, y + 51, 54, "s", "-", "s~ timedelpad");
    link(`${p}pk>${p}ms ${p}ms>${p}ln ${p}ln>${p}fp ${p}ln>${p}tp`);
  };
  const head = (p, ch, x, y) => {
    add("o", p + "r", x, y, 118, "-", "b", `r mpr121_driver_ch${ch} @hv_param`);
    add("o", p + "ch", x, y + 18.7, 32, "b", "b", "change");
    add("t", p + "tg", x, y + 33.4, 14, "b", "b");
    add("o", p + "dl", x + 33.8, y + 34, 83.5, "b", "-", "s daisyled @hv_param");
    link(`${p}r>${p}ch ${p}ch>${p}tg ${p}tg>${p}dl`);
  };
  [
    ["P3", 3, 947.2, 426.3, "-0.33"], ["P4", 4, 1078.8, 426.3, "-0.16"],
    ["P6", 6, 1422, 426.3, "0.16"], ["P7", 7, 1563, 426.3, "0.33"],
    ["P8", 8, 1000.2, 619, "-0.66"], ["P9", 9, 1466.3, 618.2, "0.66"],
  ].forEach(([p, ch, x, y, val]) => {
    head(p, ch, x, y);
    add("o", p + "sl", x, y + 55.3, 31, "b", "bbb", "sel 0 1");
    add("m", p + "m0", x + 0.5, y + 73.6, 12, "b", "b", "0");
    add("m", p + "mv", x + 17.3, y + 73.6, 24, "b", "b", val);
    add("o", p + "pt", x + 42.3, y + 73.6, 49, "-", "b", "r padstiming");
    tail(p, x, y + 91);
    link(`${p}tg>${p}sl ${p}sl>${p}m0 ${p}sl:1>${p}mv ${p}m0>${p}pk ${p}mv>${p}pk ${p}pt>${p}pk:1`);
  });
  head("P5", 5, 1226, 517);
  [
    ["P5t", 1302, 575.6, 71.5, "s 0padtemporando"],
    ["P5p", 1335, 590.4, 58, "s 0padpressed"],
    ["P3q", 1000.4, 481.6, 64, "s seqtemp_down"],
    ["P7q", 1626.7, 481.6, 54, "s seqtemp_up"],
    ["P8q", 1107.5, 692.4, 57, "s compr_down"],
    ["P9q", 1569.3, 692.4, 46.5, "s compr_up"],
  ].forEach(([id, x, y, w, text]) => add("o", id, x, y, w, "b", "-", text));
  add("o", "PCs", 1231, 618.5, 31, "b", "bbb", "sel 0 1");
  add("m", "PC0", 1231.6, 636.8, 12, "b", "b", "0");
  add("m", "PC1", 1247.8, 636.8, 12, "b", "b", "0");
  add("o", "PCt", 1273.4, 636.8, 49, "-", "b", "r padstiming");
  tail("PC", 1231, 654.4);
  nodes.PCfp.y = nodes.PCtp.y = 707.5;
  link("P5tg>P5t P5tg>P5p PCs>PC0 PCs:1>PC1 PC0>PCpk PC1>PCpk PCt>PCpk:1 P3tg>P3q P7tg>P7q P8sl>P8q P9tg>P9q");

  const offs = [0, 32.8, 74.7, 116.8, 159, 204];
  const times = [5, 350, 600, 800, 1000, 1250];
  const tw = [22, 30.5, 31, 31, 34.5, 34];
  [
    ["W1", 993.3, "ledswitch", "daisyled", 44, 83], ["W2", 1262, "customled1", "led2", 50, 68],
    ["W3", 1515, "customled2", "led1", 52, 68], ["W4", 1762, "customled3", "led3", 52, 69],
  ].forEach(([p, x, from, to, w1, w2]) => {
    add("o", p + "r", x, 209.4, w1, "-", "b", "r " + from);
    add("o", p + "sl", x, 241.2, 30, "b", "bbb", "sel 1 0");
    add("o", p + "out", x, 363.4, w2, "b", "-", `s ${to} @hv_param`);
    link(`${p}r>${p}sl ${p}sl:1>${p}d0 ${p}sl:1>${p}d1`);
    offs.forEach((o, i) => {
      add("o", `${p}d${i}`, x + o, 290.5, tw[i], "bb", "b", `del ${times[i]}`);
      add("m", `${p}m${i}`, x + o, 310.5, 11.5, "b", "b", i % 2 ? "0" : "1");
      link(`${p}sl>${p}d${i} ${p}d${i}>${p}m${i} ${p}m${i}>${p}out`);
    });
  });
  return { nodes, wires };
}

const portX = (n, count, i) =>
  count < 2 ? n.inset : n.inset + ((n.w - 2 * n.inset) * i) / (count - 1);

function wirePath(x1, y1, x2, y2) {
  const dx = Math.abs(x2 - x1);
  const dy = Math.abs(y2 - y1);
  const sy = Math.min(11, Math.max(dx, dy) * 0.5);
  const sx = y1 >= y2 ? Math.min(11, Math.min(dx, dy) * 0.5) * (x1 < x2 ? -1 : 1) : 0;
  return `M${x1} ${y1}C${x1 - sx} ${y1 + sy} ${x2 + sx} ${y2 - sy} ${x2} ${y2}`;
}

/* ---------- styled parts ---------- */
const Canvas = styled.main`
  position: relative;
  width: 2432px;
  height: 1112px;
  overflow: hidden;
  background: ${color.canvas};
  color: ${color.text};
  font-size: 7.4px;
  font-weight: 500;
  line-height: 12.6px;
`;

const Layer = styled.svg`
  position: absolute;
  inset: 0;
  width: 100%;
  height: 100%;
  pointer-events: none;
`;

const Panel = styled.section`
  position: absolute;
  left: ${(p) => p.$x}px;
  top: ${(p) => p.$y}px;
  width: ${(p) => p.$w}px;
  height: ${(p) => p.$h}px;
  background: ${color.panel};
  display: flex;
  align-items: flex-start;
  gap: 3px;
  padding: 1px;
  box-sizing: border-box;
`;

const PanelBox = styled.span`
  width: 8.5px;
  height: 8.5px;
  box-sizing: border-box;
  border: 1px solid #a6a6a6;
`;

const PanelTitle = styled.h2`
  margin: 1px 0 0;
  font-size: 8.1px;
  font-weight: 500;
  color: #f2f2f2;
`;

const corners = css`
  &::after {
    content: "";
    position: absolute;
    inset: -1.4px;
    --c: ${color.select};
    background:
      linear-gradient(var(--c), var(--c)) 0 0 / 4px 1.3px, linear-gradient(var(--c), var(--c)) 0 0 / 1.3px 4px,
      linear-gradient(var(--c), var(--c)) 100% 0 / 4px 1.3px, linear-gradient(var(--c), var(--c)) 100% 0 / 1.3px 4px,
      linear-gradient(var(--c), var(--c)) 0 100% / 4px 1.3px, linear-gradient(var(--c), var(--c)) 0 100% / 1.3px 4px,
      linear-gradient(var(--c), var(--c)) 100% 100% / 4px 1.3px, linear-gradient(var(--c), var(--c)) 100% 100% / 1.3px 4px;
    background-repeat: no-repeat;
    box-shadow: inset 0 0 0 0.8px rgba(240, 160, 156, 0.45);
  }
`;

const Box = styled.div`
  position: absolute;
  left: ${(p) => p.$n.x}px;
  top: ${(p) => p.$n.y}px;
  width: ${(p) => p.$n.w}px;
  height: ${(p) => p.$n.h}px;
  box-sizing: border-box;
  border-radius: 1px;
  background: ${color.object};
  white-space: pre;
  ${(p) => p.$n.selected && corners}
`;

const ObjectBox = styled(Box)`
  padding-left: 2.6px;
`;

const MessageBox = styled(Box)`
  padding-left: 2px;
  background: ${color.message};
  border-right: 1.4px solid #5c5c5c;
  border-radius: 1px 3px 3px 1px;
`;

const NumberBox = styled(Box)`
  padding-left: 1px;
  background: ${color.message};
  border-top-right-radius: 4px;
`;

const SliderBox = styled(Box)`
  background: linear-gradient(90deg, #e6e6e6 0.4px, #e6e6e6 2.6px, transparent 2.6px, transparent 4px, #181818 4px);
`;

const SquareBox = styled(Box)`
  background: ${(p) => p.$fill};
  display: flex;
  align-items: center;
  justify-content: center;
`;

const Name = styled.span`
  color: ${color.name};
`;

const Port = styled.i`
  position: absolute;
  left: ${(p) => p.$x - 2}px;
  top: ${(p) => p.$y}px;
  width: 4px;
  height: 1.6px;
  background: ${(p) => (p.$type === "s" ? color.signal : color.control)};
`;

const Comment = styled.p`
  position: absolute;
  left: ${(p) => p.$x}px;
  top: ${(p) => p.$y}px;
  width: ${(p) => p.$w}px;
  height: 11.6px;
  margin: 0;
  background: rgba(255, 255, 255, 0.035);
  white-space: pre;
  ${(p) => p.$selected && corners}
`;

const Note = styled(Comment)`
  display: flex;
  flex-direction: column;
  height: auto;
  line-height: 8.6px;
  padding: 2.5px 0 2px;
`;

const ToggleMark = () => (
  <svg width="8" height="8" viewBox="0 0 8 8">
    <path d="M0.5 0.5L7.5 7.5M7.5 0.5L0.5 7.5" stroke="#6c6c6c" strokeWidth="0.8" />
  </svg>
);

const BangMark = ({ size, stroke, fill }) => (
  <svg width={size} height={size} viewBox="0 0 10 10">
    <circle cx="5" cy="5" r="4" fill={fill || "none"} stroke={stroke} strokeWidth="1" />
  </svg>
);

function NodeBody({ n, children }) {
  const [first, ...rest] = n.text.split(" ");
  switch (n.kind) {
    case "message":
      return <MessageBox $n={n}>{n.text}{children}</MessageBox>;
    case "number":
      return <NumberBox $n={n}>{n.text}{children}</NumberBox>;
    case "slider":
      return <SliderBox $n={n}>{children}</SliderBox>;
    case "toggle":
      return <SquareBox $n={n} $fill="#1b1b1b"><ToggleMark />{children}</SquareBox>;
    case "bang":
      return <SquareBox $n={n} $fill="#1b1b1b"><BangMark size={n.w - 3} stroke="#6c6c6c" />{children}</SquareBox>;
    case "bangLit":
      return <SquareBox $n={n} $fill="#8fbcc6"><BangMark size={n.w - 3} stroke="#56727a" />{children}</SquareBox>;
    case "bangWhite":
      return <SquareBox $n={n} $fill="#e6e6e6"><BangMark size={n.w} stroke="#8a8a8a" fill="#fff" />{children}</SquareBox>;
    default:
      return (
        <ObjectBox $n={n}>
          <Name>{first}</Name>
          {rest.length ? " " + rest.join(" ") : ""}
          {children}
        </ObjectBox>
      );
  }
}

function Node({ n }) {
  return (
    <NodeBody n={n}>
      {[...n.ins].map((t, i) => (
        <Port key={"i" + i} $type={t} $x={portX(n, n.ins.length, i)} $y={-0.9} />
      ))}
      {[...n.outs].map((t, i) => (
        <Port key={"o" + i} $type={t} $x={portX(n, n.outs.length, i)} $y={n.h - 0.8} />
      ))}
    </NodeBody>
  );
}

function Grid() {
  const step = GRID / 3;
  return (
    <Layer>
      <defs>
        <pattern id="grid" x={23.4 - step / 2} y={21.3 - step / 2} width={GRID} height={GRID} patternUnits="userSpaceOnUse">
          <circle cx={step / 2} cy={step / 2} r="1.15" fill="#808080" />
          {[1, 2].map((i) => (
            <g key={i} fill="#5c5c5c">
              <circle cx={step / 2 + step * i} cy={step / 2} r="1" />
              <circle cx={step / 2} cy={step / 2 + step * i} r="1" />
            </g>
          ))}
        </pattern>
      </defs>
      <rect width="100%" height="100%" fill="url(#grid)" />
    </Layer>
  );
}

function Wires({ nodes, wires }) {
  return (
    <Layer fill="none" strokeLinecap="butt">
      {wires.map(([a, o, b, i], k) => {
        const s = nodes[a];
        const d = nodes[b];
        const signal = s.outs[o] === "s";
        return (
          <path
            key={k}
            d={wirePath(s.x + portX(s, s.outs.length, o), s.y + s.h + 0.4, d.x + portX(d, d.ins.length, i), d.y - 0.4)}
            stroke={color.wire}
            strokeWidth={signal ? 1.1 : 1.15}
            strokeDasharray={signal ? "3.4 1.8" : undefined}
          />
        );
      })}
    </Layer>
  );
}

const patch = buildPatch();

export default function App() {
  return (
    <>
      <GlobalStyle />
      <Canvas>
        <Grid />
        <Panel $x={935.5} $y={405.5} $w={758.5} $h={414}>
          <PanelBox />
          <PanelTitle>TOUCHPADS gain</PanelTitle>
        </Panel>
        <Panel $x={1708} $y={387.7} $w={137} $h={192}>
          <PanelBox />
          <PanelTitle>TOUCHPAD envelope timing</PanelTitle>
        </Panel>
        {COMMENTS.map(([text, x, cy, w, sel], i) => (
          <Comment key={i} $x={x} $y={cy - 5.8} $w={w} $selected={sel}>{text}</Comment>
        ))}
        {NOTES.map(([x, y, w, lines], i) => (
          <Note key={i} $x={x} $y={y} $w={w}>
            {lines.map((l) => <span key={l}>{l}</span>)}
          </Note>
        ))}
        {Object.values(patch.nodes).map((n) => <Node key={n.id} n={n} />)}
        <Wires nodes={patch.nodes} wires={patch.wires} />
      </Canvas>
    </>
  );
}
